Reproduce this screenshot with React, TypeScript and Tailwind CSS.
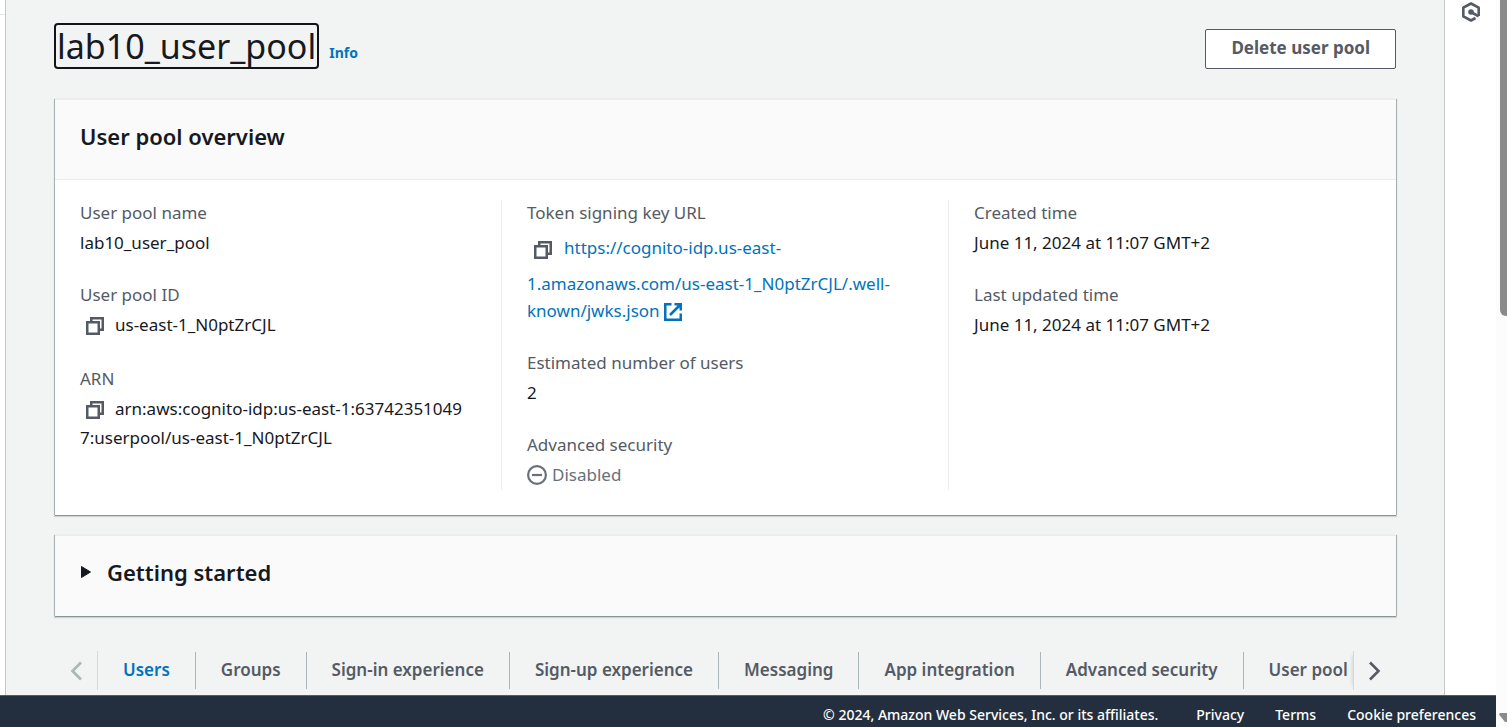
import type { ReactNode } from "react";

const tabs = [
  "Users",
  "Groups",
  "Sign-in experience",
  "Sign-up experience",
  "Messaging",
  "App integration",
  "Advanced security",
  "User pool",
];

function CopyIcon() {
  return (
    <svg viewBox="0 0 18 18" className="h-[18px] w-[18px]" fill="none" stroke="currentColor" strokeWidth="2.5" aria-hidden="true">
      <path d="M1.250 5.250h11.500v11.500H1.250z" />
      <path d="M5.250 5V1.250h11.500v11.500H13" />
    </svg>
  );
}

function CopyButton({ label, tall = false }: { label: string; tall?: boolean }) {
  return (
    <button
      type="button"
      aria-label={label}
      className={
        "mr-[5px] inline-flex items-center justify-center align-middle text-[#545b64] " +
        (tall ? "h-[41px] w-[32px]" : "h-[27px] w-[30px]")
      }
    >
      <CopyIcon />
    </button>
  );
}

function Field({ label, children }: { label: string; children: ReactNode }) {
  return (
    <div>
      <dt className="mb-[4px] leading-[25px] text-[#545b64]">{label}</dt>
      <dd className="leading-[27px] text-[#16191f]">{children}</dd>
    </div>
  );
}

function Column({ children, divided = false }: { children: ReactNode; divided?: boolean }) {
  return (
    <dl className={"flex min-w-0 flex-col gap-[26px] px-[25px] pb-[2px] " + (divided ? "border-r border-[#eaeded]" : "")}>
      {children}
    </dl>
  );
}

const card =
  "border-t border-[#eaeded] bg-white shadow-[0_1px_0_0_#879596,0_1px_1px_1px_rgba(0,28,36,0.15),1px_0_0_0_#c4cacc,-1px_0_0_0_#c4cacc]";

export default function App() {
  return (
    <div className="flex h-screen overflow-hidden bg-white font-['Noto_Sans',sans-serif] text-[17px] text-[#16191f]">
      <div className="flex min-w-0 flex-1 flex-col">
        <div className="flex min-h-0 flex-1">
          <aside className="w-[6px] shrink-0 border-r border-[#c4c8c9] pt-[14px]">
            <div className="border-t border-[#e6e8e8]" />
          </aside>

          <main className="min-w-0 flex-1 overflow-hidden bg-[#f2f3f3] px-[48px] pt-[23px]">
            <header className="flex items-start justify-between">
              <div className="flex items-end gap-[10px]">
                <h1 className="rounded-[4px] border-2 border-[#111418] px-[1px] text-[34px] leading-[42px]">lab10_user_pool</h1>
                <a href="#info" className="pb-[6px] text-[14px] leading-[20px] font-bold text-[#0073bb]">
                  Info
                </a>
              </div>
              <button
                type="button"
                className="mt-[6px] rounded-[2px] border border-[#545b64] bg-white px-[25px] pb-[2px] text-[17px] leading-[36px] font-bold text-[#545b64]"
              >
                Delete user pool
              </button>
            </header>

            <section className={"mt-[30px] ml-[1px] " + card}>
              <div className="border-b border-[#eaeded] bg-[#fafafa] px-[25px] pt-[19px] pb-[26px]">
                <h2 className="text-[22px] leading-[34px] font-semibold">User pool overview</h2>
              </div>
              <div className="grid grid-cols-3 pt-[20px] pb-[25px]">
                <Column divided>
                  <Field label="User pool name">lab10_user_pool</Field>
                  <Field label="User pool ID">
                    <CopyButton label="Copy user pool ID" />
                    us-east-1_N0ptZrCJL
                  </Field>
                  <Field label="ARN">
                    <CopyButton label="Copy ARN" />
                    arn:aws:cognito-idp:us-east-1:63742351049
                    <wbr />
                    7:userpool/us-east-1_N0ptZrCJL
                  </Field>
                </Column>
                <Column divided>
                  <Field label="Token signing key URL">
                    <CopyButton label="Copy token signing key URL" tall />
                    <a href="#jwks" className="text-[#0073bb]">
                      https://cognito-idp.us-east-
                      <wbr />
                      1.amazonaws.com/us-east-1_N0ptZrCJL/.well-
                      <wbr />
                      known/jwks.json{" "}
                      <svg viewBox="0 0 18 18" className="inline h-[18px] w-[18px]" fill="none" stroke="currentColor" strokeWidth="2.5" aria-hidden="true">
                        <path d="M7.500 1.250H1.250v15.500h15.500V10.500" />
                        <path d="M10.500 1.250h6.250V7.500M16.500 1.500 6 12" />
                      </svg>
                    </a>
                  </Field>
                  <Field label="Estimated number of users">2</Field>
                  <Field label="Advanced security">
                    <span className="flex items-center gap-[5px] text-[#687078]">
                      <svg viewBox="0 0 20 20" className="h-[20px] w-[20px]" fill="none" stroke="currentColor" strokeWidth="2.2" aria-hidden="true">
                        <circle cx="10" cy="10" r="8.900" />
                        <path d="M5 10h10" />
                      </svg>
                      Disabled
                    </span>
                  </Field>
                </Column>
                <Column>
                  <Field label="Created time">June 11, 2024 at 11:07 GMT+2</Field>
                  <Field label="Last updated time">June 11, 2024 at 11:07 GMT+2</Field>
                </Column>
              </div>
            </section>

            <section className={"mt-[20px] ml-[1px] " + card}>
              <button type="button" className="flex w-full items-center gap-[16px] bg-[#fafafa] px-[26px] pt-[19px] pb-[27px] text-left">
                <svg viewBox="0 0 10 12" className="h-[12px] w-[10px]" aria-hidden="true">
                  <path d="M.5.5 9.5 6l-9 5.5z" fill="#16191f" stroke="#16191f" strokeLinejoin="round" />
                </svg>
                <span className="text-[22px] leading-[34px] font-semibold">Getting started</span>
              </button>
            </section>

            <nav className="mt-[35px] flex items-center text-[#545b64]">
              <button type="button" aria-label="Scroll left" className="flex h-[39px] w-[44px] items-center justify-center border-r border-[#d5dbdb] text-[#aab7b8]">
                <svg viewBox="0 0 12 20" className="h-[20px] w-[12px]" fill="none" stroke="currentColor" strokeWidth="2.6" aria-hidden="true">
                  <path d="M11 1.5 2.5 10l8.5 8.5" />
                </svg>
              </button>
              <div role="tablist" className="flex min-w-0 flex-1 overflow-hidden">
                {tabs.map((tab, i) => (
                  <button
                    key={tab}
                    type="button"
                    role="tab"
                    aria-selected={i === 0}
                    className={
                      "shrink-0 border-r border-[#aab7b8] px-[25px] pb-[1px] leading-[36px] font-semibold whitespace-nowrap " +
                      (i === 0 ? "text-[#0073bb]" : "text-[#545b64]")
                    }
                  >
                    {tab}
                  </button>
                ))}
              </div>
              <button type="button" aria-label="Scroll right" className="flex h-[39px] w-[43px] items-center justify-center border-l border-[#d5dbdb] shadow-[-4px_0_4px_-4px_rgba(0,28,36,0.2)]">
                <svg viewBox="0 0 12 20" className="h-[20px] w-[12px]" fill="none" stroke="currentColor" strokeWidth="2.6" aria-hidden="true">
                  <path d="M1 1.5 9.5 10 1 18.5" />
                </svg>
              </button>
            </nav>
          </main>

          <aside className="w-[52px] shrink-0 border-l border-[#c4c8c9] bg-white pt-[2px] pl-[16px]">
            <button type="button" aria-label="Open diagnostics panel" className="block text-[#545b64]">
              <svg viewBox="0 0 20 20" className="h-[20px] w-[20px]" fill="none" stroke="currentColor" strokeWidth="2.6" aria-hidden="true">
                <path d="M17.700 14V5.700L10 1.500 2.300 5.700v8.600L10 18.500l4.500-2.500" strokeLinejoin="round" />
                <path d="m10 10 7.700 4.300" strokeWidth="2.600" />
                <circle cx="10" cy="10" r="2.800" fill="currentColor" stroke="none" />
              </svg>
            </button>
          </aside>
        </div>

        <footer className="flex h-[32px] shrink-0 items-center justify-end border-t border-[#545b64] bg-[#232f3e] pt-[6px] pr-[20px] text-[14px] font-medium text-white">
          <span className="mr-[38px]">© 2024, Amazon Web Services, Inc. or its affiliates.</span>
          <div className="flex gap-[31px]">
            <a href="#privacy">Privacy</a>
            <a href="#terms">Terms</a>
            <a href="#cookies">Cookie preferences</a>
          </div>
        </footer>
      </div>

      <div className="flex w-[11px] shrink-0 flex-col items-end justify-between bg-[#fcfcfc] pb-[4px]" aria-hidden="true">
        <div className="h-[316px] w-[7px] rounded-bl-[6px] bg-[#8b8b8b]" />
        <svg viewBox="0 0 8 10" className="h-[10px] w-[8px]">
          <path d="M0 1.500Q0 0 1.500 0H8v9H6Z" fill="#8b8b8b" />
        </svg>
      </div>
    </div>
  );
}
